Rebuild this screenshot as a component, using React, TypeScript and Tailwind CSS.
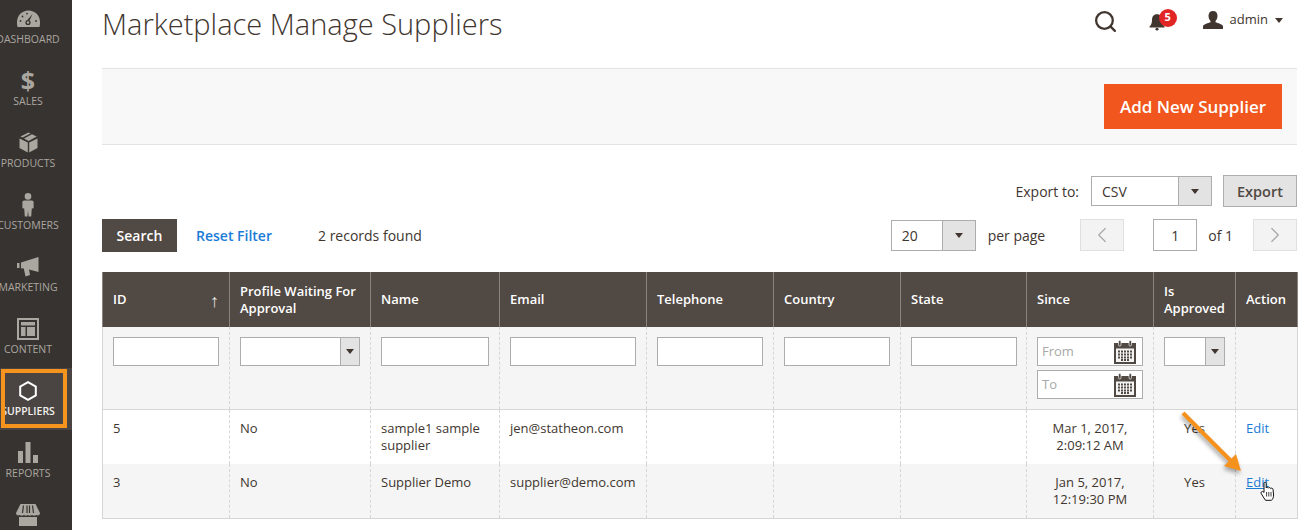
import type { ReactNode } from "react";
import { ChevronLeft, ChevronRight, Search } from "lucide-react";

const menuColor = "#aaa6a0";

function DashboardIcon() {
  return (
    <svg width="23" height="17" viewBox="0 0 23 17">
      <path
        fill={menuColor}
        fillRule="evenodd"
        d="M0.5 17 C0 15 0 13.5 0 12 C0 5.5 5 0.5 11.5 0.5 C18 0.5 23 5.5 23 12 C23 13.5 23 15 22.5 17 Z"
      />
      <path d="M15.5 4 L12.6 10.5 L10.4 10 Z" fill="#373330" />
      <circle cx="11" cy="12.5" r="2.6" fill="#373330" />
      <circle cx="11" cy="12.5" r="1.2" fill={menuColor} />
      <circle cx="3.5" cy="11" r="0.9" fill="#373330" />
      <circle cx="5.5" cy="6.5" r="0.9" fill="#373330" />
      <circle cx="10" cy="3.6" r="0.9" fill="#373330" />
      <circle cx="19" cy="11" r="0.9" fill="#373330" />
    </svg>
  );
}

function ProductsIcon() {
  return (
    <svg width="19" height="21" viewBox="0 0 19 21">
      <path fill={menuColor} d="M0.5 6.6 L8.8 10.6 V20.6 L0.5 16 Z M18.5 6.6 L10.2 10.6 V20.6 L18.5 16 Z" />
      <path fill={menuColor} d="M9.5 0.4 L11.5 1.4 L3.6 5.5 L1.4 4.5 Z M13 2.2 L17.7 4.6 L9.5 9 L5 6.6 Z" />
    </svg>
  );
}

function CustomersIcon() {
  return (
    <svg width="12" height="24" viewBox="0 0 12 24">
      <circle cx="6" cy="3.4" r="3.3" fill={menuColor} />
      <path
        fill={menuColor}
        d="M2.2 7.5 H9.8 C11 7.5 11.6 8.3 11.6 9.4 V15.2 L9.8 15.6 L9.2 23.5 H6.6 L6 17.5 L5.4 23.5 H2.8 L2.2 15.6 L0.4 15.2 V9.4 C0.4 8.3 1 7.5 2.2 7.5 Z"
      />
    </svg>
  );
}

function MarketingIcon() {
  return (
    <svg width="22" height="20" viewBox="0 0 22 20">
      <path fill={menuColor} d="M0 6 H2.5 V11 H0 Z M4 5.5 L21.5 0 V15 L12 12.6 L13 18 L8.5 19.5 L6.8 11.6 L4 11.3 Z" />
    </svg>
  );
}

function ContentIcon() {
  return (
    <svg width="22" height="22" viewBox="0 0 22 22">
      <path
        fill={menuColor}
        fillRule="evenodd"
        d="M0 0 H22 V22 H0 Z M2 2 V20 H20 V2 Z M4 4 H18 V7.5 H4 Z M4 9 H8.5 V18 H4 Z M10 9 H18 V18 H10 Z"
      />
    </svg>
  );
}

function SuppliersIcon() {
  return (
    <svg width="18" height="20" viewBox="0 0 18 20">
      <path d="M9 1.2 L16.8 5.5 V14.5 L9 18.8 L1.2 14.5 V5.5 Z" fill="none" stroke="#ffffff" strokeWidth="2" />
    </svg>
  );
}

function ReportsIcon() {
  return (
    <svg width="20" height="21" viewBox="0 0 20 21">
      <path fill={menuColor} d="M0 9 H5 V21 H0 Z M7.5 0 H12.5 V21 H7.5 Z M15 13 H20 V21 H15 Z" />
    </svg>
  );
}

function StoresIcon() {
  return (
    <svg width="24" height="22" viewBox="0 0 24 22">
      <path
        fill={menuColor}
        d="M4.5 0 H19.5 L24 9 C24 11 22 12 20.4 11 C19 12 17.4 12 16 11 C14.6 12 13.2 12 12 11 C10.6 12 9.2 12 8 11 C6.6 12 5 12 3.6 11 C2 12 0 11 0 9 Z"
      />
      <path stroke="#373330" strokeWidth="1.2" d="M7.5 1.5 L6.5 9 M11 1.5 V9 M13.5 1.5 V9 M16.5 1.5 L17.5 9" />
      <path fill={menuColor} d="M3 13 H21 V22 H3 Z" />
    </svg>
  );
}

function MenuItem({ icon, label, active }: { icon: ReactNode; label?: string; active?: boolean }) {
  return (
    <div className={`relative h-[62px] w-[72px] shrink-0 pt-[9px] ${active ? "bg-[#4a4542]" : ""}`}>
      <div className="flex w-[56px] flex-col items-center">
        <div className="flex h-[27px] items-center justify-center">{icon}</div>
        <div
          className={`whitespace-nowrap text-[10.5px] leading-[14px] ${
            active ? "font-semibold text-[#f2f0ee]" : "text-[#aaa6a0]"
          }`}
        >
          {label}
        </div>
      </div>
      {active && <div className="absolute left-[1px] top-[1px] h-[59px] w-[66px] border-[4px] border-[#f7941e]" />}
    </div>
  );
}

function Sidebar() {
  return (
    <aside className="h-[530px] w-[72px] shrink-0 overflow-hidden bg-[#373330]">
      <div className="-mt-[4px] flex flex-col">
        <MenuItem icon={<DashboardIcon />} label="DASHBOARD" />
        <MenuItem
          icon={<span className="text-[25px] font-bold leading-[27px] text-[#aaa6a0]">$</span>}
          label="SALES"
        />
        <MenuItem icon={<ProductsIcon />} label="PRODUCTS" />
        <MenuItem icon={<CustomersIcon />} label="CUSTOMERS" />
        <MenuItem icon={<MarketingIcon />} label="MARKETING" />
        <MenuItem icon={<ContentIcon />} label="CONTENT" />
        <MenuItem icon={<SuppliersIcon />} label="SUPPLIERS" active />
        <MenuItem icon={<ReportsIcon />} label="REPORTS" />
        <MenuItem icon={<StoresIcon />} />
      </div>
    </aside>
  );
}

function Caret({ className = "border-t-[#41362f]" }: { className?: string }) {
  return <span className={`block h-0 w-0 border-x-[4.5px] border-t-[5px] border-x-transparent ${className}`} />;
}

function SelectBox({ value, className }: { value?: string; className: string }) {
  return (
    <div className={`flex h-[29px] border border-[#adadad] bg-white ${className}`}>
      <div className="flex-1 pl-[10px] text-[14px] leading-[27px] text-[#41362f]">{value}</div>
      <div className="flex w-[19px] items-center justify-center border-l border-[#adadad] bg-[#e3e3e3]">
        <Caret />
      </div>
    </div>
  );
}

function TextBox({ className = "w-[106px]" }: { className?: string }) {
  return <div className={`h-[29px] border border-[#adadad] bg-white ${className}`} />;
}

function CalendarIcon() {
  return (
    <svg width="22" height="24" viewBox="0 0 22 24">
      <path fill="#514943" d="M0 3 H22 V24 H0 Z" />
      <rect x="2" y="8.5" width="18" height="13.5" fill="#f4f4f4" />
      <rect x="4.5" y="0.5" width="2.5" height="5.5" rx="1.2" fill="#514943" stroke="#f4f4f4" strokeWidth="0.7" />
      <rect x="15" y="0.5" width="2.5" height="5.5" rx="1.2" fill="#514943" stroke="#f4f4f4" strokeWidth="0.7" />
      <path
        stroke="#514943"
        strokeWidth="2"
        strokeDasharray="2 1"
        d="M4 11.5 H18 M4 14.5 H18 M4 17.5 H18 M7 20 H15"
      />
    </svg>
  );
}

function DateBox({ placeholder }: { placeholder: string }) {
  return (
    <div className="flex h-[29px] w-[106px] items-center justify-between border border-[#adadad] bg-white pl-[4px] pr-[6px]">
      <span className="text-[13px] text-[#a8a8a8]">{placeholder}</span>
      <CalendarIcon />
    </div>
  );
}

const headCell =
  "border-x border-[#8a837f] bg-[#514943] px-[10px] text-left align-middle text-[13px] font-semibold leading-[17px] text-white";
const filterCell = "border-x border-dashed border-[#d6d6d6] px-[10px] pt-[10px] align-top";
const bodyCell =
  "border-x border-dashed border-[#d6d6d6] px-[10px] pt-[10px] align-top text-[13px] leading-[17px] text-[#41362f]";

function SuppliersGrid() {
  return (
    <table className="w-[1195px] table-fixed border-collapse border-x border-b border-[#d6d6d6]">
      <colgroup>
        <col className="w-[127px]" />
        <col className="w-[141px]" />
        <col className="w-[129px]" />
        <col className="w-[147px]" />
        <col className="w-[127px]" />
        <col className="w-[127px]" />
        <col className="w-[126px]" />
        <col className="w-[127px]" />
        <col className="w-[82px]" />
        <col className="w-[62px]" />
      </colgroup>
      <thead>
        <tr className="h-[55px]">
          <th className={headCell}>
            <div className="flex items-center justify-between">
              <span>ID</span>
              <span className="text-[18px] font-normal leading-none text-[#e6e3e0]">↑</span>
            </div>
          </th>
          <th className={headCell}>Profile Waiting For Approval</th>
          <th className={headCell}>Name</th>
          <th className={headCell}>Email</th>
          <th className={headCell}>Telephone</th>
          <th className={headCell}>Country</th>
          <th className={headCell}>State</th>
          <th className={headCell}>Since</th>
          <th className={headCell}>Is Approved</th>
          <th className={headCell}>Action</th>
        </tr>
      </thead>
      <tbody>
        <tr className="h-[82px] border-b border-[#d6d6d6] bg-[#f5f5f5]">
          <td className={filterCell}>
            <TextBox />
          </td>
          <td className={filterCell}>
            <SelectBox className="w-[120px]" />
          </td>
          <td className={filterCell}>
            <TextBox className="w-[108px]" />
          </td>
          <td className={filterCell}>
            <TextBox className="w-[126px]" />
          </td>
          <td className={filterCell}>
            <TextBox />
          </td>
          <td className={filterCell}>
            <TextBox />
          </td>
          <td className={filterCell}>
            <TextBox />
          </td>
          <td className={filterCell}>
            <div className="flex flex-col gap-[4px]">
              <DateBox placeholder="From" />
              <DateBox placeholder="To" />
            </div>
          </td>
          <td className={filterCell}>
            <SelectBox className="w-[61px]" />
          </td>
          <td className={filterCell} />
        </tr>
        <tr className="h-[55px]">
          <td className={bodyCell}>5</td>
          <td className={bodyCell}>No</td>
          <td className={bodyCell}>sample1 sample supplier</td>
          <td className={bodyCell}>jen@statheon.com</td>
          <td className={bodyCell} />
          <td className={bodyCell} />
          <td className={bodyCell} />
          <td className={`${bodyCell} text-center`}>Mar 1, 2017, 2:09:12 AM</td>
          <td className={`${bodyCell} text-center`}>Yes</td>
          <td className={bodyCell}>
            <span className="text-[#1c7cd6]">Edit</span>
          </td>
        </tr>
        <tr className="h-[54px] bg-[#f5f5f5]">
          <td className={bodyCell}>3</td>
          <td className={bodyCell}>No</td>
          <td className={bodyCell}>Supplier Demo</td>
          <td className={bodyCell}>supplier@demo.com</td>
          <td className={bodyCell} />
          <td className={bodyCell} />
          <td className={bodyCell} />
          <td className={`${bodyCell} text-center`}>Jan 5, 2017, 12:19:30 PM</td>
          <td className={`${bodyCell} text-center`}>Yes</td>
          <td className={bodyCell}>
            <span className="text-[#1c7cd6] underline">Edit</span>
          </td>
        </tr>
      </tbody>
    </table>
  );
}

function BellIcon() {
  return (
    <svg width="16" height="18" viewBox="0 0 16 20" preserveAspectRatio="none">
      <path
        fill="#41362f"
        d="M8 1.5 C11.5 1.5 13 4.5 13 8 C13 11.5 14 13.5 15.5 15 V16 H0.5 V15 C2 13.5 3 11.5 3 8 C3 4.5 4.5 1.5 8 1.5 Z"
      />
      <circle cx="8" cy="18" r="1.5" fill="#41362f" />
    </svg>
  );
}

function UserIcon() {
  return (
    <svg className="relative bottom-[2px]" width="20" height="18" viewBox="0 0 20 19" preserveAspectRatio="none">
      <path
        fill="#41362f"
        d="M10 0 C13 0 14.5 2.2 14.5 5 C14.5 7.5 13.5 9.5 12.5 10.5 V12 C15 13 19 14 20 16 V19 H0 V16 C1 14 5 13 7.5 12 V10.5 C6.5 9.5 5.5 7.5 5.5 5 C5.5 2.2 7 0 10 0 Z"
      />
    </svg>
  );
}

function Arrow() {
  return (
    <svg
      className="pointer-events-none absolute left-[1175px] top-[405px] drop-shadow-[-1px_3px_2px_rgba(0,0,0,0.35)]"
      width="80"
      height="80"
      viewBox="0 0 80 80"
    >
      <path d="M8 8 L58 58" stroke="#f5921e" strokeWidth="4" />
      <path d="M66 66 L49 61 L61 49 Z" fill="#f5921e" />
    </svg>
  );
}

function HandCursor() {
  return (
    <svg className="pointer-events-none absolute left-[1260px] top-[481px]" width="17" height="20" viewBox="0 0 17 20">
      <path
        fill="#ffffff"
        stroke="#111111"
        strokeWidth="1"
        strokeLinejoin="round"
        d="M4 10 V2.2 C4 0.8 6.2 0.8 6.2 2.2 V7 C6.4 6 8.2 6 8.4 7.2 C8.7 6.2 10.5 6.3 10.7 7.6 C11 6.8 12.8 7 13 8.2 L13.6 14 C13.6 16.5 12.5 18.5 11.5 19.3 H5.5 C4 17 2.5 15 1.2 12.5 C0.4 10.8 2.6 9.6 4 11.5 Z"
      />
      <path stroke="#111111" strokeWidth="0.8" d="M6.6 11 V15.5 M8.8 11 V15.5 M11 11 V15.5" />
    </svg>
  );
}

export default function App() {
  return (
    <div className="relative flex h-[530px] w-[1309px] overflow-hidden bg-white font-['Open_Sans',sans-serif] text-[#41362f]">
      <Sidebar />

      <main className="min-w-0 flex-1 pl-[30px] pr-[12px]">
        <header className="flex h-[68px] items-start justify-between">
          <h1 className="mt-[4px] text-[29px] font-light leading-[40px] text-[#41362f]">Marketplace Manage Suppliers</h1>
          <div className="mt-[9px] flex items-center pr-[14px]">
            <Search size={25} strokeWidth={2.2} className="text-[#41362f]" />
            <div className="relative ml-[31px] mr-[38px] flex">
              <BellIcon />
              <span className="absolute -right-[12px] -top-[4px] flex h-[18px] w-[18px] items-center justify-center rounded-full bg-[#e22626] text-[11px] font-bold text-white">
                5
              </span>
            </div>
            <UserIcon />
            <span className="relative bottom-[2px] ml-[7px] mr-[7px] text-[13px] text-[#41362f]">admin</span>
            <span className="relative bottom-[1px]">
              <Caret />
            </span>
          </div>
        </header>

        <div className="flex h-[77px] items-center justify-end border-y border-[#e3e3e3] bg-[#f8f8f8] pr-[15px]">
          <button className="h-[45px] w-[178px] bg-[#f0561d] text-[17px] font-semibold text-white">Add New Supplier</button>
        </div>

        <div className="mt-[30px] flex h-[32px] items-center justify-end">
          <span className="mr-[12px] text-[14px]">Export to:</span>
          <div className="flex h-[30px] w-[121px] border border-[#adadad] bg-white">
            <div className="flex-1 pl-[10px] text-[14px] leading-[29px]">CSV</div>
            <div className="flex w-[33px] items-center justify-center border-l border-[#adadad] bg-[#e3e3e3]">
              <Caret />
            </div>
          </div>
          <button className="ml-[11px] h-[32px] w-[74px] border border-[#adadad] bg-[#e3e3e3] pt-[1px] text-[14.5px] font-semibold text-[#514943]">
            Export
          </button>
        </div>

        <div className="mt-[11px] flex h-[34px] items-center">
          <button className="h-[33px] w-[75px] bg-[#514943] text-[14px] font-semibold text-white">Search</button>
          <span className="ml-[19px] text-[14px] font-semibold text-[#1c7cd6]">Reset Filter</span>
          <span className="ml-[46px] text-[14px]">2 records found</span>
          <div className="ml-auto flex items-center">
            <div className="flex h-[31px] w-[85px] border border-[#adadad] bg-white">
              <div className="flex-1 pl-[10px] text-[14px] leading-[29px]">20</div>
              <div className="flex w-[33px] items-center justify-center border-l border-[#adadad] bg-[#e3e3e3]">
                <Caret />
              </div>
            </div>
            <span className="ml-[12px] text-[14px]">per page</span>
            <div className="ml-[35px] flex h-[32px] w-[44px] items-center justify-center border border-[#e0e0e0] bg-[#f3f3f3]">
              <ChevronLeft size={26} strokeWidth={1.1} className="text-[#a8a8a8]" />
            </div>
            <div className="ml-[29px] flex h-[32px] w-[44px] items-center justify-center border border-[#adadad] bg-white text-[14px]">
              1
            </div>
            <span className="ml-[11px] text-[14px]">of 1</span>
            <div className="ml-[20px] flex h-[32px] w-[44px] items-center justify-center border border-[#e0e0e0] bg-[#f3f3f3]">
              <ChevronRight size={26} strokeWidth={1.1} className="text-[#a8a8a8]" />
            </div>
          </div>
        </div>

        <div className="mt-[20px]">
          <SuppliersGrid />
        </div>
      </main>

      <Arrow />
      <HandCursor />
    </div>
  );
}
